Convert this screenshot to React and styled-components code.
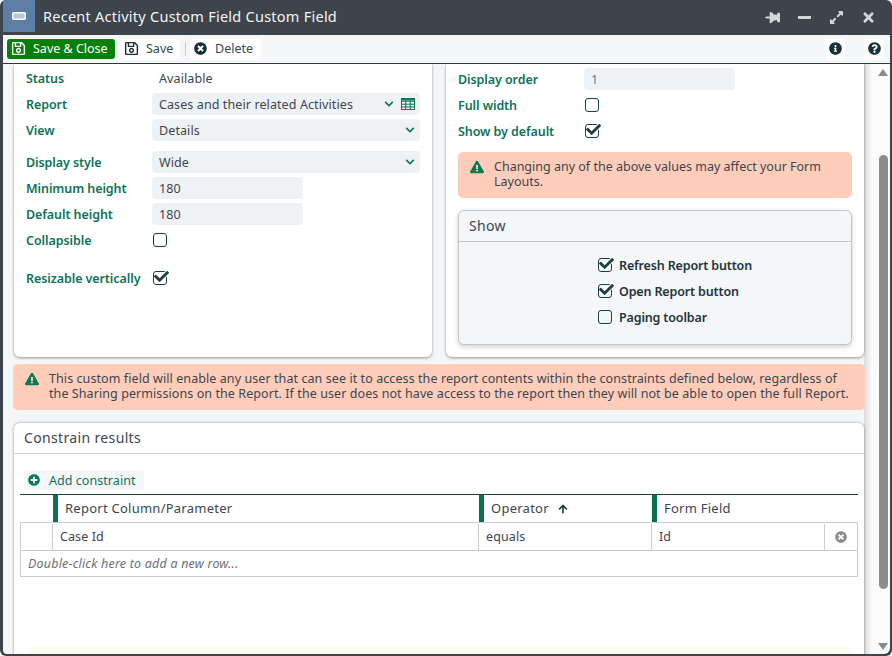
import React from 'react';
import styled, { createGlobalStyle } from 'styled-components';
import {
  FaRegSave, FaTimesCircle, FaInfoCircle, FaQuestionCircle, FaThumbtack, FaPlusCircle,
  FaArrowUp, FaExclamationTriangle, FaChevronDown, FaCheck, FaExpandAlt, FaTimes, FaMinus,
} from 'react-icons/fa';

const GlobalStyle = createGlobalStyle`
  html, body { margin: 0; padding: 0; background: #fff; }
  * { box-sizing: border-box; }
  body { font-family: "Noto Sans", "Open Sans", sans-serif; font-size: 13px; color: #3c4650; }
`;

const Window = styled.div`
  width: 892px;
  height: 656px;
  display: flex;
  flex-direction: column;
  overflow: hidden;
  background: #3d444b;
  border-radius: 6px;
  padding: 0 2px 2px 3px;
`;

const TitleBar = styled.div`
  height: 35px;
  flex: none;
  display: flex;
  align-items: flex-start;
  color: #fff;
`;

const TitleIcon = styled.div`
  width: 32px;
  height: 32px;
  background: #5d7ea6;
  display: flex;
  align-items: center;
  justify-content: center;
`;

const Title = styled.div`
  margin-left: 8px;
  height: 32px;
  line-height: 32px;
  font-size: 14.5px;
  letter-spacing: 0.25px;
  color: #f2f4f6;
  flex: 1;
`;

const WinButtons = styled.div`
  display: flex;
  align-items: center;
  gap: 17px;
  height: 34px;
  padding-right: 14px;
  color: #d4d6d8;
  font-size: 15px;
`;

const Toolbar = styled.div`
  height: 29px;
  flex: none;
  background: #f4f6f8;
  border-bottom: 1px solid #23403a;
  display: flex;
  align-items: center;
  padding: 0 6px 1px 4px;
`;

const ToolButton = styled.button`
  width: ${p => p.$w}px;
  height: 20px;
  border: none;
  border-radius: 3px;
  padding: 0 0 0 4px;
  margin-left: ${p => p.$ml || 0}px;
  display: flex;
  align-items: center;
  gap: ${p => p.$gap || 7}px;
  font: inherit;
  font-size: 12.5px;
  letter-spacing: 0;
  white-space: nowrap;
  background: ${p => (p.$primary ? '#078007' : '#fff')};
  color: ${p => (p.$primary ? '#fff' : '#3c4650')};
  svg { flex: none; font-size: 15px; color: ${p => (p.$primary ? '#fff' : '#17313a')}; }
`;

const DeleteButton = styled(ToolButton)`
  svg { font-size: 13px; }
`;

const ToolDivider = styled.span`
  width: 1px;
  height: 14px;
  background: #c8ccd0;
  margin: 0 4px 0 5px;
`;

const Spacer = styled.div`
  flex: 1;
`;

const IconButton = styled.button`
  width: 20px;
  height: 20px;
  border: none;
  border-radius: 3px;
  padding: 0;
  margin-left: ${p => p.$ml || 0}px;
  background: #fff;
  color: #17313a;
  font-size: 13px;
  display: flex;
  align-items: center;
  justify-content: center;
`;

const Body = styled.div`
  flex: 1;
  min-height: 0;
  display: flex;
  border-bottom-left-radius: 4px;
  border-bottom-right-radius: 6px;
  overflow: hidden;
`;

const Scroller = styled.div`
  width: 869px;
  flex: none;
  background: linear-gradient(to right, #d9dbdd, #fafbfb) right top / 8px 100% no-repeat, #f4f6f8;
  overflow: hidden;
  padding: 0 7px 0 10px;
`;

const Columns = styled.div`
  display: grid;
  grid-template-columns: 418px 418px;
  gap: 14px;
  padding-left: 1px;
  height: 293px;
`;

const Card = styled.div`
  background: #fff;
  border-bottom-left-radius: 6px;
  border-bottom-right-radius: 6px;
  box-shadow: 0 1px 3px rgba(0, 0, 0, 0.4);
  padding: 1px 12px 0;
`;

const Row = styled.div`
  display: flex;
  align-items: center;
  height: 22px;
  margin-top: ${p => p.$mt ?? 4}px;
`;

const Label = styled.div`
  width: ${p => p.$w || 126}px;
  flex: none;
  font-weight: 600;
  font-size: 12.5px;
  color: #0e7358;
  letter-spacing: -0.08px;
`;

const Value = styled.div`
  padding-left: 7px;
  font-size: 12.5px;
  letter-spacing: 0.1px;
`;

const Field = styled.div`
  width: ${p => p.$w || 268}px;
  height: 22px;
  flex: none;
  background: #eff2f4;
  border-radius: 4px;
  padding: 0 7px;
  display: flex;
  align-items: center;
  font-size: 12.5px;
  letter-spacing: 0.1px;
  color: ${p => p.$color || '#3c4650'};
`;

const FieldIcons = styled.span`
  margin-left: auto;
  display: flex;
  align-items: center;
  gap: 7px;
  color: #087a55;
  font-size: 10px;
  margin-right: -2px;
`;

const CheckBox = styled.span`
  width: 14px;
  height: 14px;
  flex: none;
  position: relative;
  display: inline-block;
  border: 1.5px solid #17414a;
  border-radius: 3px;
  margin-left: ${p => p.$ml || 1}px;
  background: transparent;
  svg {
    position: absolute;
    left: 0;
    top: -3px;
    font-size: 15px;
    color: #23403f;
    stroke: #fff;
    stroke-width: 60px;
    paint-order: stroke;
  }
`;

const Alert = styled.div`
  background: #ffcdb9;
  border-radius: 5px;
  padding: 7px 10px 0 12px;
  height: 46px;
  display: flex;
  gap: 10px;
  font-size: 12.5px;
  line-height: 15px;
  letter-spacing: ${p => p.$spacing || 0}px;
  svg { flex: none; color: #087a55; font-size: 14px; margin-top: 1px; }
  margin: ${p => p.$margin || 0};
`;

const Panel = styled.div`
  background: #f4f6f8;
  border: 1px solid #c3c6c9;
  border-radius: 6px;
  height: 135px;
  margin-top: 12px;
  box-shadow: 0 2px 5px rgba(0, 0, 0, 0.18);
`;

const PanelHead = styled.div`
  height: 31px;
  border-bottom: 1px solid #c3c6c9;
  display: flex;
  align-items: center;
  padding: 0 0 2px 10px;
  font-size: 14px;
  letter-spacing: 0.3px;
`;

const ShowList = styled.div`
  padding: 12px 0 0 139px;
  display: flex;
  flex-direction: column;
  gap: 4px;
`;

const ShowRow = styled.div`
  height: 22px;
  display: flex;
  align-items: center;
  gap: 7px;
  font-weight: 600;
  font-size: 12.5px;
  letter-spacing: -0.15px;
  color: #23343c;
  ${CheckBox} { margin-left: 0; }
`;

const ConstrainCard = styled.div`
  background: #fff;
  border-radius: 6px 6px 0 0;
  margin: 13px 0 0 1px;
  width: 850px;
  height: 232px;
  box-shadow: 0 0 3px rgba(0, 0, 0, 0.4);
  display: flex;
  flex-direction: column;
`;

const ConstrainHead = styled.div`
  height: 31px;
  flex: none;
  border-bottom: 1px solid #cfd2d4;
  display: flex;
  align-items: center;
  padding: 0 0 1px 10px;
  font-size: 14px;
  letter-spacing: 0.35px;
`;

const AddButton = styled.button`
  width: 120px;
  height: 20px;
  flex: none;
  margin: 16px 0 4px 10px;
  border: none;
  border-radius: 3px;
  background: #f4f6f8;
  padding: 0 0 0 4px;
  display: flex;
  align-items: center;
  gap: 9px;
  font: inherit;
  font-size: 12.5px;
  letter-spacing: 0.05px;
  color: #0e7358;
  svg { font-size: 12px; color: #087a55; }
`;

const Table = styled.div`
  margin-left: 6px;
  width: 838px;
  flex: none;
`;

const HeadRow = styled.div`
  display: grid;
  grid-template-columns: 33px 426px 173px 206px;
  height: 29px;
  border-top: 1px solid #23403a;
  border-bottom: 1px solid #cbcdcf;
`;

const HeadCell = styled.div`
  display: flex;
  align-items: center;
  gap: 9px;
  padding: 0 0 1px 7px;
  border-left: 5px solid #087350;
  font-size: 13px;
  letter-spacing: 0.25px;
  svg { font-size: 10px; color: #17313a; margin-top: 1px; }
`;

const DataRow = styled.div`
  display: grid;
  grid-template-columns: 31px 426px 173px 173px 33px;
  height: 28px;
  padding-top: 1px;
  border-left: 1px solid #cbcdcf;
  border-right: 1px solid #cbcdcf;
  border-bottom: 1px solid #cbcdcf;
`;

const DataCell = styled.div`
  display: flex;
  align-items: center;
  padding: 0 0 2px 7px;
  font-size: 12.5px;
  letter-spacing: 0.1px;
  border-left: ${p => (p.$first ? 'none' : '1px solid #cbcdcf')};
`;

const RemoveCell = styled(DataCell)`
  justify-content: center;
  padding: 0;
  color: #8c8c8c;
  font-size: 12px;
`;

const AddRow = styled.div`
  height: 26px;
  display: flex;
  align-items: center;
  padding-left: 7px;
  border-left: 1px solid #cbcdcf;
  border-right: 1px solid #cbcdcf;
  border-bottom: 1px solid #cbcdcf;
  font-style: italic;
  font-size: 12.5px;
  letter-spacing: 0.2px;
  color: #6c7176;
`;

const Hint = styled.div`
  margin: 70px 12px 0;
  height: 30px;
  flex: none;
  background: #fffbee;
  border-radius: 6px;
`;

const Track = styled.div`
  flex: 1;
  background: #fbfbfc;
  display: flex;
  flex-direction: column;
  align-items: center;
  padding: 5px 0 0 4px;
`;

const Arrow = styled.span`
  width: 0;
  height: 0;
  border-left: 5px solid transparent;
  border-right: 5px solid transparent;
  ${p => (p.$down ? 'border-top: 7px solid #8a8a8a;' : 'border-bottom: 7px solid #8a8a8a;')}
`;

const Thumb = styled.div`
  width: 9px;
  height: 434px;
  margin: 79px 0 54px;
  background: #8c8c8c;
  border-radius: 5px;
`;

const Check = ({ on }) => <CheckBox>{on && <FaCheck />}</CheckBox>;

const GridIcon = () => (
  <svg width="14" height="12" viewBox="0 0 14 12" fill="none" stroke="#087a55" strokeWidth="1">
    <rect x="0.5" y="0.5" width="13" height="11" />
    <path d="M0 3.2h14M0 6.2h14M0 9h14M4.7 3v9M9.3 3v9" />
    <path d="M0 1.5h14" strokeWidth="2" />
  </svg>
);

export default function App() {
  return (
    <>
      <GlobalStyle />
      <Window>
        <TitleBar>
          <TitleIcon>
            <svg width="14" height="8" viewBox="0 0 14 8">
              <rect x="0.75" y="0.75" width="12.5" height="6.5" rx="1" fill="#b8c6d8" stroke="#fff" strokeWidth="1.5" />
            </svg>
          </TitleIcon>
          <Title>Recent Activity Custom Field Custom Field</Title>
          <WinButtons>
            <FaThumbtack style={{ transform: 'rotate(90deg)' }} />
            <FaMinus />
            <FaExpandAlt />
            <FaTimes />
          </WinButtons>
        </TitleBar>
        <Toolbar>
          <ToolButton $primary $w={108}><FaRegSave />Save &amp; Close</ToolButton>
          <ToolButton $w={60} $ml={5}><FaRegSave />Save</ToolButton>
          <ToolDivider />
          <DeleteButton $w={71} $gap={8}><FaTimesCircle />Delete</DeleteButton>
          <Spacer />
          <IconButton><FaInfoCircle /></IconButton>
          <IconButton $ml={19}><FaQuestionCircle /></IconButton>
        </Toolbar>
        <Body>
          <Scroller>
            <Columns>
              <Card>
                <Row $mt={2}>
                  <Label>Status</Label>
                  <Value>Available</Value>
                </Row>
                <Row>
                  <Label>Report</Label>
                  <Field>
                    Cases and their related Activities
                    <FieldIcons><FaChevronDown /><GridIcon /></FieldIcons>
                  </Field>
                </Row>
                <Row>
                  <Label>View</Label>
                  <Field>Details<FieldIcons><FaChevronDown /></FieldIcons></Field>
                </Row>
                <Row $mt={10}>
                  <Label>Display style</Label>
                  <Field>Wide<FieldIcons><FaChevronDown /></FieldIcons></Field>
                </Row>
                <Row>
                  <Label>Minimum height</Label>
                  <Field $w={151}>180</Field>
                </Row>
                <Row>
                  <Label>Default height</Label>
                  <Field $w={151}>180</Field>
                </Row>
                <Row>
                  <Label>Collapsible</Label>
                  <Check />
                </Row>
                <Row $mt={16}>
                  <Label>Resizable vertically</Label>
                  <Check on />
                </Row>
              </Card>
              <Card>
                <Row $mt={3}>
                  <Label>Display order</Label>
                  <Field $w={151} $color="#5e7f99">1</Field>
                </Row>
                <Row>
                  <Label>Full width</Label>
                  <Check />
                </Row>
                <Row>
                  <Label>Show by default</Label>
                  <Check on />
                </Row>
                <Alert $margin="10px 0 0">
                  <FaExclamationTriangle />
                  <span>Changing any of the above values may affect your Form Layouts.</span>
                </Alert>
                <Panel>
                  <PanelHead>Show</PanelHead>
                  <ShowList>
                    <ShowRow><Check on />Refresh Report button</ShowRow>
                    <ShowRow><Check on />Open Report button</ShowRow>
                    <ShowRow><Check />Paging toolbar</ShowRow>
                  </ShowList>
                </Panel>
              </Card>
            </Columns>
            <Alert $margin="7px 0 0" $spacing={0.08}>
              <FaExclamationTriangle />
              <span>
                This custom field will enable any user that can see it to access the report contents within the constraints defined below, regardless of the Sharing permissions on the Report. If the user does not have access to the report then they will not be able to open the full Report.
              </span>
            </Alert>
            <ConstrainCard>
              <ConstrainHead>Constrain results</ConstrainHead>
              <AddButton><FaPlusCircle />Add constraint</AddButton>
              <Table>
                <HeadRow>
                  <div />
                  <HeadCell>Report Column/Parameter</HeadCell>
                  <HeadCell>Operator <FaArrowUp /></HeadCell>
                  <HeadCell>Form Field</HeadCell>
                </HeadRow>
                <DataRow>
                  <DataCell $first />
                  <DataCell>Case Id</DataCell>
                  <DataCell>equals</DataCell>
                  <DataCell>Id</DataCell>
                  <RemoveCell><FaTimesCircle /></RemoveCell>
                </DataRow>
                <AddRow>Double-click here to add a new row...</AddRow>
              </Table>
              <Hint />
            </ConstrainCard>
          </Scroller>
          <Track>
            <Arrow />
            <Thumb />
            <Arrow $down />
          </Track>
        </Body>
      </Window>
    </>
  );
}
